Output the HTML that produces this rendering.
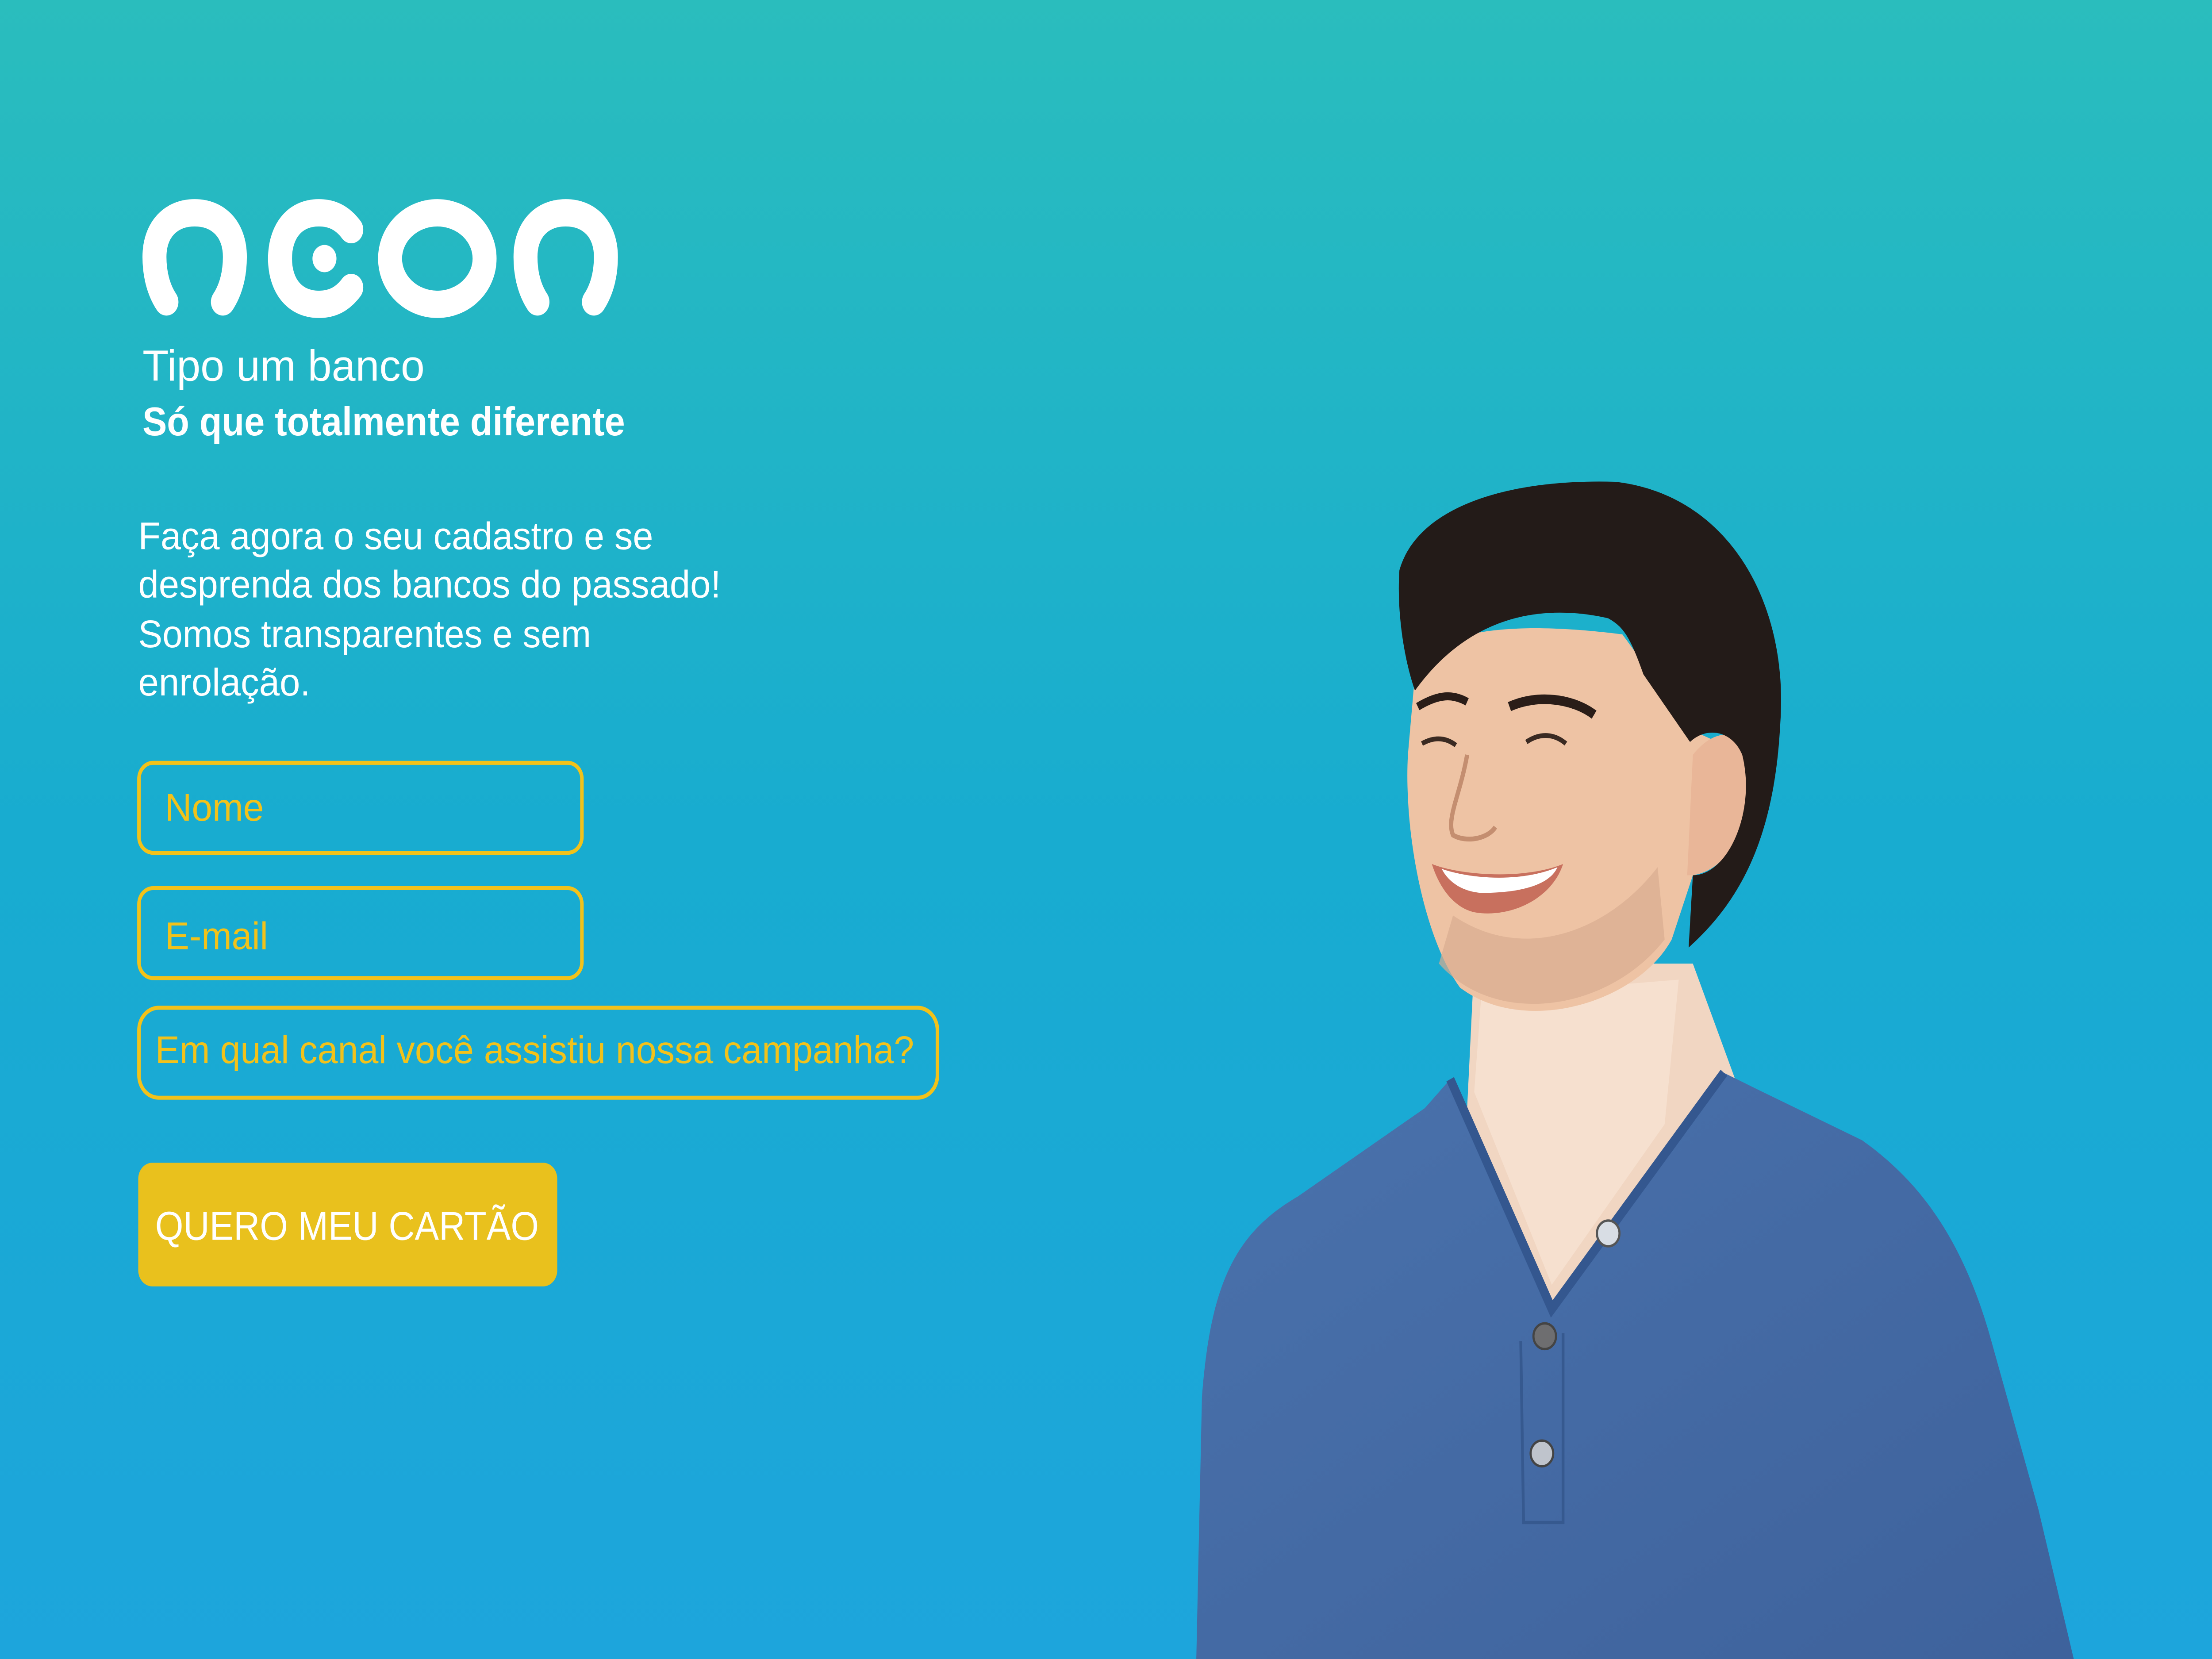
<!DOCTYPE html>
<html><head><meta charset="utf-8"><style>
html,body{margin:0;padding:0;width:100%;height:100%;overflow:hidden;background:#1DA5DC}
svg{display:block;position:fixed;left:0;top:0;width:100vw;height:100vh}
text{font-family:"Liberation Sans",sans-serif}
</style></head><body>
<svg viewBox="0 0 1568 1033" preserveAspectRatio="none" xmlns="http://www.w3.org/2000/svg">
<defs>
<linearGradient id="bg" x1="0" y1="0" x2="0" y2="1">
<stop offset="0" stop-color="#2ABDBD"/>
<stop offset="0.5" stop-color="#18ACD0"/>
<stop offset="1" stop-color="#1DA5DC"/>
</linearGradient>
<linearGradient id="sh" x1="0" y1="0" x2="1" y2="1">
<stop offset="0" stop-color="#4A72AC"/>
<stop offset="1" stop-color="#3E629C"/>
</linearGradient>
</defs>
<rect width="1568" height="1033" fill="url(#bg)"/>

<g fill="none" stroke="#fff" stroke-width="17" stroke-linecap="round">
<path d="M118,188 C112,180 109.5,170 109.5,160 C109.5,143 121,132.5 138,132.5 C155,132.5 166.5,143 166.5,160 C166.5,170 164,180 158,188"/>
<path d="M249,143 C243,136 236,132.5 226,132.5 C208,132.5 198.5,145 198.5,161 C198.5,177 208,189.5 226,189.5 C236,189.5 243,186 249,179"/>
<ellipse cx="310" cy="161" rx="33.5" ry="28.5"/>
<path d="M381,188 C375,180 372.5,170 372.5,160 C372.5,143 384,132.5 401,132.5 C418,132.5 429.5,143 429.5,160 C429.5,170 427,180 421,188"/>
</g>
<circle cx="230" cy="161" r="8.5" fill="#fff"/>

<text x="101" y="237" font-size="27" fill="#fff" textLength="200" lengthAdjust="spacingAndGlyphs">Tipo um banco</text>
<text x="101" y="271" font-size="25" font-weight="bold" fill="#fff" textLength="342" lengthAdjust="spacingAndGlyphs">Só que totalmente diferente</text>

<g font-size="24" fill="#fff">
<text x="98" y="342" textLength="365" lengthAdjust="spacingAndGlyphs">Faça agora o seu cadastro e se</text>
<text x="98" y="372" textLength="413" lengthAdjust="spacingAndGlyphs">desprenda dos bancos do passado!</text>
<text x="98" y="403" textLength="321" lengthAdjust="spacingAndGlyphs">Somos transparentes e sem</text>
<text x="98" y="433" textLength="122" lengthAdjust="spacingAndGlyphs">enrolação.</text>
</g>

<g fill="none" stroke="#F2C21A" stroke-width="2.5">
<rect x="98.5" y="475" width="314" height="56" rx="10"/>
<rect x="98.5" y="553" width="314" height="56" rx="10"/>
<rect x="98.5" y="627.5" width="566" height="56" rx="14"/>
</g>
<g font-size="24" fill="#F2C21A">
<text x="117" y="511" textLength="70" lengthAdjust="spacingAndGlyphs">Nome</text>
<text x="117" y="591" textLength="73" lengthAdjust="spacingAndGlyphs">E-mail</text>
<text x="110" y="662" textLength="538" lengthAdjust="spacingAndGlyphs">Em qual canal você assistiu nossa campanha?</text>
</g>
<rect x="98" y="724" width="297" height="77" rx="10" fill="#E9C11D"/>
<text x="110" y="772" font-size="25" fill="#fff" textLength="272" lengthAdjust="spacingAndGlyphs">QUERO MEU CARTÃO</text>

<path d="M1045,600 L1040,690 L1100,815 L1230,672 L1200,600 Z" fill="#F1D6C2"/>
<path d="M1050,620 L1045,680 L1100,800 L1180,700 L1190,610 Z" fill="#F6E0CF"/>
<path d="M848,1033 L852,870 C858,800 875,768 920,745 L1010,690 L1028,672 L1100,815 L1222,668 L1245,678 L1320,710 C1360,735 1390,770 1410,830 L1445,940 L1470,1033 Z" fill="url(#sh)"/>
<path d="M1028,672 L1100,815 L1222,668" fill="none" stroke="#34578F" stroke-width="6"/>
<path d="M1078,835 L1080,948 L1108,948 L1108,830" fill="none" stroke="#36598F" stroke-width="2"/>
<circle cx="1140" cy="768" r="8" fill="#D8DDE4" stroke="#555" stroke-width="1.5"/>
<circle cx="1095" cy="832" r="8" fill="#6E6E70" stroke="#444" stroke-width="1.5"/>
<circle cx="1093" cy="905" r="8" fill="#BFC4CC" stroke="#444" stroke-width="1.5"/>
<path d="M1003,420 C1010,395 1060,385 1150,395 L1200,455 L1225,465 C1245,495 1235,540 1200,545 L1185,585 C1160,625 1080,645 1035,615 C1010,585 995,520 998,470 Z" fill="#EEC3A4"/>
<path d="M1020,600 C1060,640 1140,630 1180,585 L1175,540 C1140,580 1080,600 1030,570 Z" fill="#D9AD90" opacity="0.7"/>
<path d="M1200,470 C1220,448 1245,455 1242,490 C1240,520 1220,545 1196,545 Z" fill="#E9B698"/>
<path d="M992,355 C1005,315 1070,298 1145,300 C1225,308 1268,375 1262,450 C1258,520 1235,560 1197,590 L1200,545 C1225,545 1245,505 1235,470 C1228,455 1210,452 1198,462 L1165,420 C1155,395 1150,390 1140,385 C1090,375 1040,385 1003,430 C995,410 990,380 992,355 Z" fill="#231B18"/>
<path d="M1005,440 C1020,432 1030,432 1040,437" stroke="#2a1d18" stroke-width="5" fill="none"/>
<path d="M1070,440 C1090,432 1115,435 1130,445" stroke="#2a1d18" stroke-width="6" fill="none"/>
<path d="M1008,463 C1018,458 1026,460 1032,464" stroke="#3a2a22" stroke-width="3" fill="none"/>
<path d="M1082,462 C1092,456 1102,457 1110,463" stroke="#3a2a22" stroke-width="3" fill="none"/>
<path d="M1040,470 C1035,495 1025,510 1030,520 C1040,525 1055,522 1060,515" stroke="#C48E70" stroke-width="3" fill="none"/>
<path d="M1015,538 C1035,545 1080,548 1108,538 C1100,560 1070,572 1045,568 C1030,565 1020,552 1015,538 Z" fill="#C8705E"/>
<path d="M1022,541 C1045,548 1080,549 1104,540 C1098,552 1075,556 1050,556 C1035,555 1026,548 1022,541 Z" fill="#fff"/>
</svg>
</body></html>
